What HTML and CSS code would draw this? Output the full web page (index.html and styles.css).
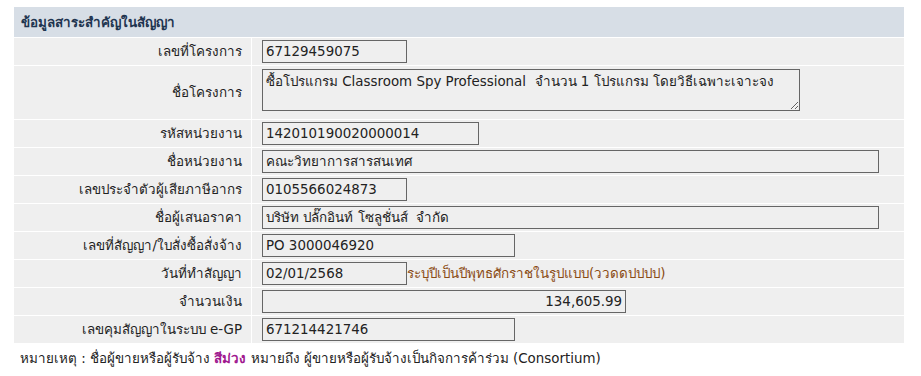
FILE: index.html
```html
<!DOCTYPE html>
<html lang="th">
<head>
  <meta charset="UTF-8" />
  <title>ข้อมูลสาระสำคัญในสัญญา</title>
  <link rel="stylesheet" href="styles.css">
</head>
<body>
  <div class="page">
    <table class="contract">
      <tr class="head">
        <th colspan="2">ข้อมูลสาระสำคัญในสัญญา</th>
      </tr>
      <tr>
        <td class="label">เลขที่โครงการ</td>
        <td class="value"><input class="w-sm" type="text" value="67129459075" readonly></td>
      </tr>
      <tr class="tall">
        <td class="label">ชื่อโครงการ</td>
        <td class="value"><textarea readonly>ซื้อโปรแกรม Classroom Spy Professional  จำนวน 1 โปรแกรม โดยวิธีเฉพาะเจาะจง</textarea></td>
      </tr>
      <tr>
        <td class="label">รหัสหน่วยงาน</td>
        <td class="value"><input class="w-md" type="text" value="142010190020000014" readonly></td>
      </tr>
      <tr>
        <td class="label">ชื่อหน่วยงาน</td>
        <td class="value"><input class="w-xl" type="text" value="คณะวิทยาการสารสนเทศ" readonly></td>
      </tr>
      <tr>
        <td class="label">เลขประจำตัวผู้เสียภาษีอากร</td>
        <td class="value"><input class="w-sm" type="text" value="0105566024873" readonly></td>
      </tr>
      <tr>
        <td class="label">ชื่อผู้เสนอราคา</td>
        <td class="value"><input class="w-xl" type="text" value="บริษัท ปลั๊กอินท์ โซลูชั่นส์  จำกัด" readonly></td>
      </tr>
      <tr>
        <td class="label">เลขที่สัญญา/ใบสั่งซื้อสั่งจ้าง</td>
        <td class="value"><input class="w-lg" type="text" value="PO 3000046920" readonly></td>
      </tr>
      <tr>
        <td class="label">วันที่ทำสัญญา</td>
        <td class="value"><input class="w-sm" type="text" value="02/01/2568" readonly><span class="hint">ระบุปีเป็นปีพุทธศักราชในรูปแบบ(ววดดปปปป)</span></td>
      </tr>
      <tr>
        <td class="label">จำนวนเงิน</td>
        <td class="value"><input class="w-amt num" type="text" value="134,605.99" readonly></td>
      </tr>
      <tr>
        <td class="label">เลขคุมสัญญาในระบบ e-GP</td>
        <td class="value"><input class="w-lg" type="text" value="671214421746" readonly></td>
      </tr>
    </table>
    <p class="note">หมายเหตุ : ชื่อผู้ขายหรือผู้รับจ้าง <b class="purple">สีม่วง</b> หมายถึง ผู้ขายหรือผู้รับจ้างเป็นกิจการค้าร่วม (Consortium)</p>
  </div>
</body>
</html>
```

FILE: styles.css
```css
html, body {
  margin: 0;
  padding: 0;
  background: #fff;
  font-family: Tahoma, "DejaVu Sans", sans-serif;
  font-size: 13.4px;
  color: #222;
}

.page {
  padding: 6px 0 0 13px;
}

.contract {
  width: 892px;
  border-collapse: separate;
  border-spacing: 1px;
}

.contract th {
  height: 30px;
  padding: 0 0 0 7px;
  text-align: left;
  font-weight: bold;
  color: #1f3550;
  background: #d7dee6;
}

.contract td {
  height: 27px;
  padding: 0;
  background: #efefef;
}

.label {
  width: 228px;
  padding-right: 9px !important;
  text-align: right;
  white-space: nowrap;
}

.value {
  padding-left: 10px !important;
  white-space: nowrap;
}

input, textarea {
  box-sizing: border-box;
  height: 23px;
  margin: 0;
  padding: 0 3px;
  border: 1px solid #666;
  background: #efefef;
  font-family: inherit;
  font-size: 13.4px;
  color: #222;
  vertical-align: middle;
}

textarea {
  display: block;
  width: 538px;
  height: 42px;
  margin: 3px 0 8px;
  padding: 1px 3px;
  resize: both;
}

.w-sm { width: 145px; }
.w-md { width: 217px; }
.w-lg { width: 253px; }
.w-amt { width: 364px; }
.w-xl { width: 617px; }

.num {
  text-align: right;
}

.hint {
  color: #8a4b14;
  vertical-align: middle;
}

.note {
  margin: 4px 0 0 7px;
}

.purple {
  color: #a0188f;
}
```
